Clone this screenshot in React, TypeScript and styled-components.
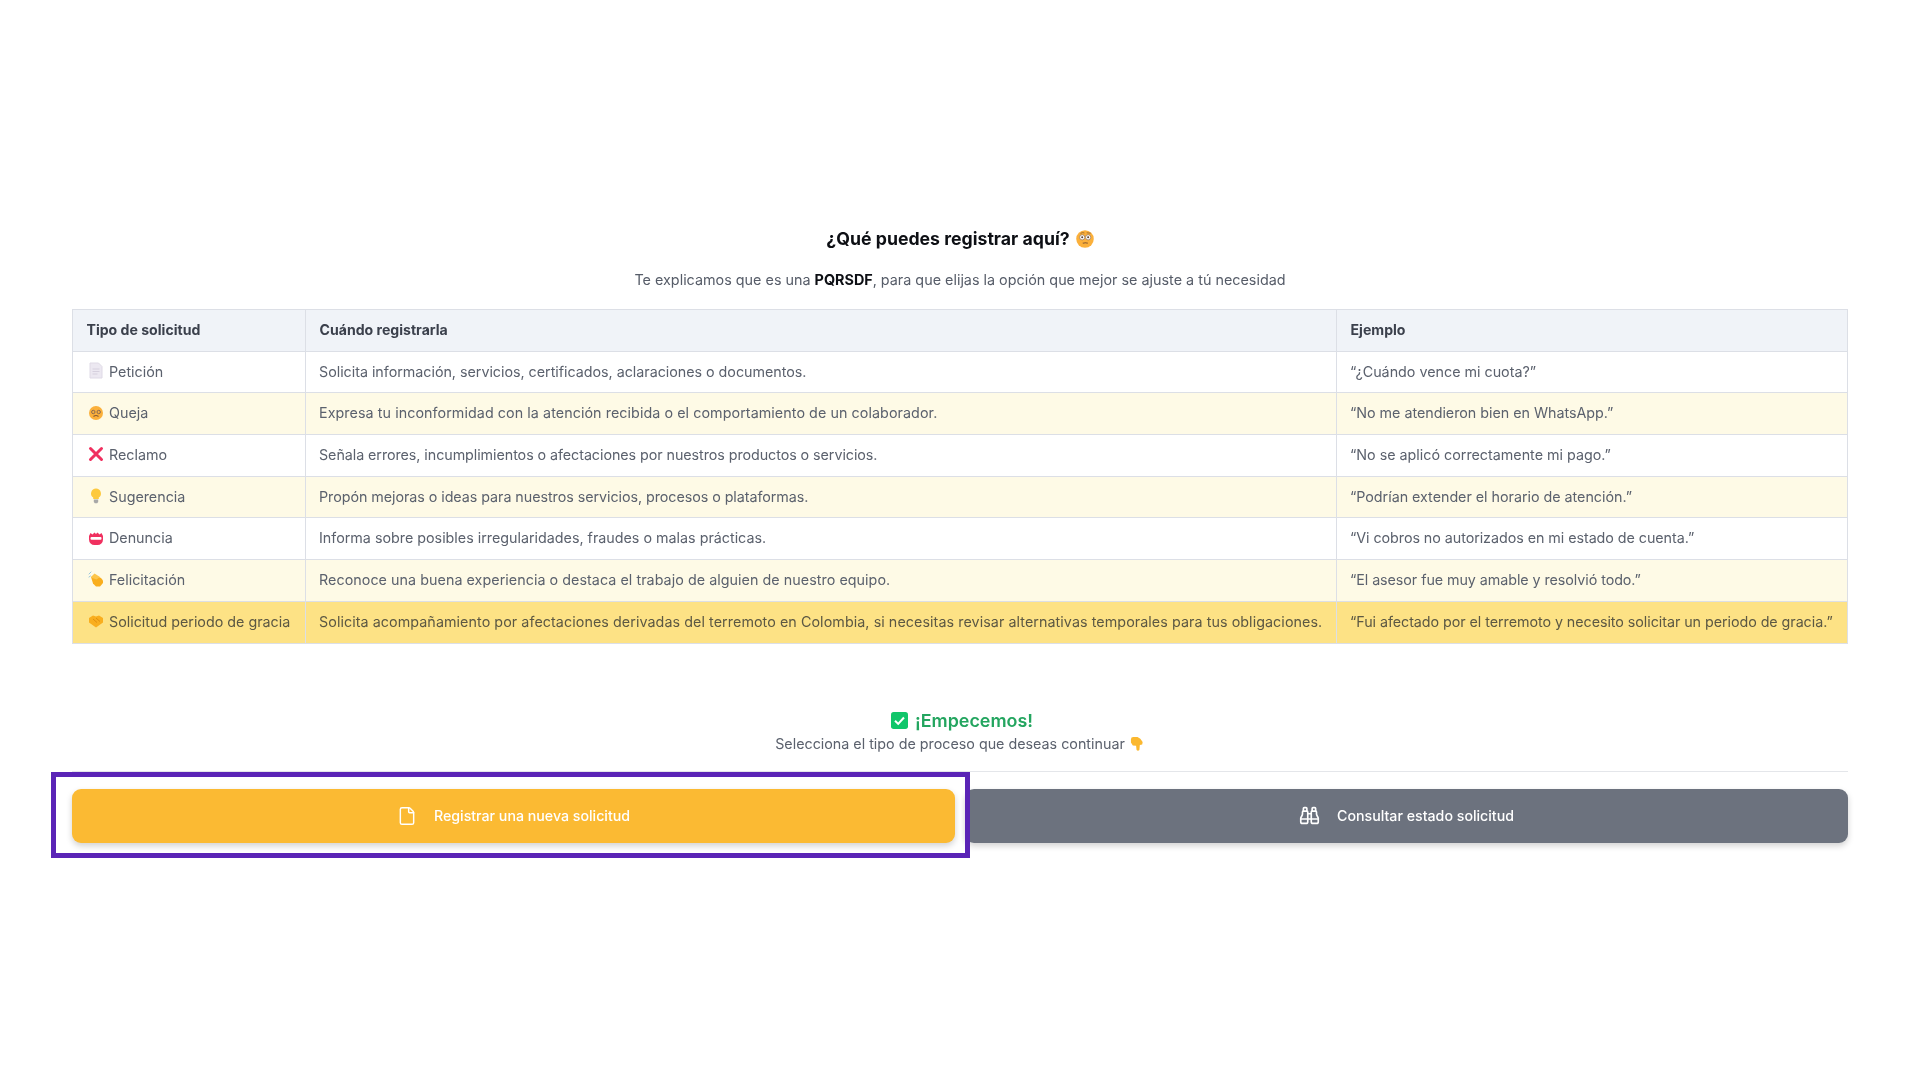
import React from "react";
import styled, { createGlobalStyle } from "styled-components";
import { Binoculars, File } from "lucide-react";

const Global = createGlobalStyle`
  html, body { margin: 0; padding: 0; background: #fff; }
  body { font-family: Inter, "Noto Sans", sans-serif; }
`;

const Page = styled.main`
  width: 1920px;
  height: 1080px;
  box-sizing: border-box;
  padding: 226px 72px 0;
  filter: blur(0.3px);
`;
const Title = styled.h2`
  margin: 0;
  height: 26px;
  padding-bottom: 1px;
  box-sizing: border-box;
  display: flex;
  align-items: center;
  justify-content: center;
  gap: 6px;
  font-size: 17.7px;
  font-weight: 700;
  color: #0d0f14;
`;
const Lead = styled.p`
  margin: 15px 0 16px;
  height: 26px;
  line-height: 26px;
  text-align: center;
  font-size: 14.37px;
  color: #565c68;
  b { color: #0d0f14; font-weight: 700; }
`;
const Table = styled.table`
  width: 1775px;
  border-collapse: collapse;
  table-layout: fixed;
  font-size: 14.3px;
  color: #5b616d;
`;
const Th = styled.th`
  height: 41.7px;
  box-sizing: border-box;
  padding: 0 13px 2px 13.5px;
  text-align: left;
  font-size: 14.1px;
  font-weight: 700;
  color: #3b404c;
  background: #f0f3f8;
  border: 1.6px solid #dcdfe6;
`;
const Row = styled.tr<{ $tone: "white" | "soft" | "strong" }>`
  background: ${(p) => (p.$tone === "white" ? "#fff" : p.$tone === "soft" ? "#fefae6" : "#fde285")};
  color: ${(p) => (p.$tone === "strong" ? "#5c5843" : "#5b616d")};
`;
const Td = styled.td<{ $track?: number }>`
  height: 41.7px;
  box-sizing: border-box;
  padding: 0 13px 2px;
  white-space: nowrap;
  letter-spacing: ${(p) => p.$track ?? 0}px;
  border: 1.6px solid #dcdfe6;
`;
const Kind = styled.span`
  display: flex;
  align-items: center;
  gap: 4px;
  padding-left: 1px;
`;
const Glyph = styled.svg<{ $size?: number }>`
  width: ${(p) => p.$size ?? 18}px;
  height: ${(p) => p.$size ?? 18}px;
  flex: none;
`;
const Start = styled.div`
  margin-top: 65px;
  display: flex;
  flex-direction: column;
  align-items: center;
`;
const StartTitle = styled.h3`
  margin: 0;
  height: 24px;
  padding-left: 4px;
  display: flex;
  align-items: center;
  gap: 7px;
  font-size: 17.9px;
  font-weight: 600;
  color: #23a55f;
`;
const StartSub = styled.p`
  margin: 0;
  height: 22px;
  display: flex;
  align-items: center;
  gap: 5px;
  font-size: 14.3px;
  color: #5b616d;
`;
const Divider = styled.hr`
  margin: 16px 0 17px;
  border: 0;
  height: 1px;
  background: #e4e6ea;
`;
const Actions = styled.div`
  display: grid;
  grid-template-columns: 1fr 1fr;
  gap: 10px;
`;
const Highlighted = styled.div`
  position: relative;
  display: flex;
`;
const Frame = styled.div`
  position: absolute;
  inset: -17px -15px -15px -21px;
  border: 5.5px solid #5a24b6;
  pointer-events: none;
`;
const Action = styled.button<{ $bg: string }>`
  flex: 1;
  width: 100%;
  height: 54px;
  padding-bottom: 1px;
  border: 0;
  border-radius: 9px;
  background: ${(p) => p.$bg};
  color: #fff;
  font: 500 14.2px Inter, "Noto Sans", sans-serif;
  display: flex;
  align-items: center;
  justify-content: center;
  gap: 17px;
  box-shadow: 0 3px 6px rgba(0, 0, 0, 0.18);
`;

const Doc = () => (
  <Glyph viewBox="-1 -1 18 18">
    <path d="M2 0h8.500L14 3.500V15H2z" fill="#ece8f1" stroke="#dfdae6" />
    <path d="M4.500 6h7M4.500 8.500h7M4.500 11h5" stroke="#d6d0de" />
  </Glyph>
);
const Sad = () => (
  <Glyph viewBox="-1 -1 18 18">
    <circle cx="8" cy="8" r="7" fill="#fbb03b" />
    <circle cx="5.300" cy="7" r="1.700" fill="none" stroke="#8a6a50" />
    <circle cx="10.700" cy="7" r="1.700" fill="none" stroke="#8a6a50" />
    <path d="M5.500 11.500q2.500-2 5 0" fill="none" stroke="#8a5a30" strokeWidth="1.200" />
  </Glyph>
);
const Cross = () => (
  <Glyph viewBox="-1 -1 18 18">
    <path d="M2.500 2.500l11 11M13.500 2.500l-11 11" stroke="#f0305f" strokeWidth="3" strokeLinecap="round" />
  </Glyph>
);
const Bulb = () => (
  <Glyph viewBox="-1 -1 18 18">
    <path d="M8 .5a5 5 0 0 0-2.800 9.100V11h5.600V9.600A5 5 0 0 0 8 .5z" fill="#fdc93f" />
    <path d="M5.800 11.500h4.400V14l-1 1.200H6.800l-1-1.200z" fill="#a8a8a8" />
  </Glyph>
);
const Mouth = () => (
  <Glyph viewBox="-1 -1 18 18">
    <path d="M1 6l1.500-3 2 1.500L6.500 2.500 8 4l1.500-1.500 2 2 2-1.500L15 6v3.500a5.500 5.500 0 0 1-5.500 5.500h-3A5.500 5.500 0 0 1 1 9.500z" fill="#f0305f" />
    <rect x="2.500" y="7" width="11" height="2.800" rx="1" fill="#fff" />
  </Glyph>
);
const Clap = () => (
  <Glyph viewBox="-1 -1 18 18">
    <path d="M1 3l2-2M1 6l1.500-1" stroke="#9bc7dd" strokeLinecap="round" />
    <path d="M3 6l3-2.500 7 3.500 2 2.500V12l-3 3.500H8l-3-3z" fill="#f9ae1e" />
    <path d="M3 6.500l3.500-4 5.500 3.500-3.500 2.500z" fill="#fcc54a" />
  </Glyph>
);
const Shake = () => (
  <Glyph viewBox="-1 -1 18 18">
    <path d="M1 5l4-2.500 3 1 3-1L15 5v4.500L8 14.500 1 9.500z" fill="#f9ae1e" />
    <path d="M5 6l4 3.500M8 5l4 3.500" stroke="#e08f10" />
  </Glyph>
);
const Wonder = () => (
  <Glyph viewBox="0 0 16 16">
    <circle cx="8" cy="8" r="7.800" fill="#fbb03b" />
    <circle cx="5.500" cy="6.500" r="2.300" fill="#fff" stroke="#8a6a50" strokeWidth=".6" />
    <circle cx="10.800" cy="6.500" r="2.300" fill="#fff" stroke="#8a6a50" strokeWidth=".6" />
    <circle cx="5.500" cy="6.500" r=".9" fill="#5a4030" />
    <circle cx="10.800" cy="6.500" r=".9" fill="#5a4030" />
    <path d="M4 3q2-1.200 3.500-.3M9.500 2.500l3.500.3" fill="none" stroke="#8a5a30" strokeWidth=".7" />
    <path d="M6 11.800q2.500-1 4.500 0" fill="none" stroke="#8a5a30" />
  </Glyph>
);
const Check = () => (
  <Glyph $size={17} viewBox="0 0 16 16">
    <rect width="16" height="16" rx="2.500" fill="#10c66a" />
    <path d="M3.800 8.200l3 3 5.400-6" fill="none" stroke="#fff" strokeWidth="1.900" />
  </Glyph>
);
const PointDown = () => (
  <Glyph $size={15} viewBox="0 0 16 16">
    <path d="M1 3.500Q1 1 3.500 1H8l3 2 2.500 3.500-.5 2.500-2.500 .5-.5 5.500q-1.500 1.500-3 0L6.500 10.500 3 10 1 7z" fill="#fbb82f" />
  </Glyph>
);

const rows = [
  ["Petición", <Doc />, "Solicita información, servicios, certificados, aclaraciones o documentos.", "“¿Cuándo vence mi cuota?”", "white", -0.02, 0],
  ["Queja", <Sad />, "Expresa tu inconformidad con la atención recibida o el comportamiento de un colaborador.", "“No me atendieron bien en WhatsApp.”", "soft", 0.07, -0.02],
  ["Reclamo", <Cross />, "Señala errores, incumplimientos o afectaciones por nuestros productos o servicios.", "“No se aplicó correctamente mi pago.”", "white", -0.06, 0],
  ["Sugerencia", <Bulb />, "Propón mejoras o ideas para nuestros servicios, procesos o plataformas.", "“Podrían extender el horario de atención.”", "soft", -0.05, -0.02],
  ["Denuncia", <Mouth />, "Informa sobre posibles irregularidades, fraudes o malas prácticas.", "“Vi cobros no autorizados en mi estado de cuenta.”", "white", 0, -0.05],
  ["Felicitación", <Clap />, "Reconoce una buena experiencia o destaca el trabajo de alguien de nuestro equipo.", "“El asesor fue muy amable y resolvió todo.”", "soft", 0.05, -0.06],
  ["Solicitud periodo de gracia", <Shake />, "Solicita acompañamiento por afectaciones derivadas del terremoto en Colombia, si necesitas revisar alternativas temporales para tus obligaciones.", "“Fui afectado por el terremoto y necesito solicitar un periodo de gracia.”", "strong", 0.07, -0.05],
] as const;

export default function App() {
  return (
    <Page>
      <Global />
      <Title>¿Qué puedes registrar aquí? <Wonder /></Title>
      <Lead>Te explicamos que es una <b>PQRSDF</b>, para que elijas la opción que mejor se ajuste a tú necesidad</Lead>
      <Table>
        <colgroup>
          <col width="233" />
          <col width="1031" />
          <col width="511" />
        </colgroup>
        <thead>
          <tr>
            <Th>Tipo de solicitud</Th>
            <Th>Cuándo registrarla</Th>
            <Th>Ejemplo</Th>
          </tr>
        </thead>
        <tbody>
          {rows.map(([name, icon, when, example, tone, whenTrack, exampleTrack]) => (
            <Row key={name} $tone={tone}>
              <Td><Kind>{icon}{name}</Kind></Td>
              <Td $track={whenTrack}>{when}</Td>
              <Td $track={exampleTrack}>{example}</Td>
            </Row>
          ))}
        </tbody>
      </Table>
      <Start>
        <StartTitle><Check />¡Empecemos!</StartTitle>
        <StartSub>Selecciona el tipo de proceso que deseas continuar <PointDown /></StartSub>
      </Start>
      <Divider />
      <Actions>
        <Highlighted>
          <Action $bg="#fbba33"><File size={20} strokeWidth={1.75} />Registrar una nueva solicitud</Action>
          <Frame />
        </Highlighted>
        <Action $bg="#6c727e"><Binoculars size={21} strokeWidth={1.9} />Consultar estado solicitud</Action>
      </Actions>
    </Page>
  );
}
